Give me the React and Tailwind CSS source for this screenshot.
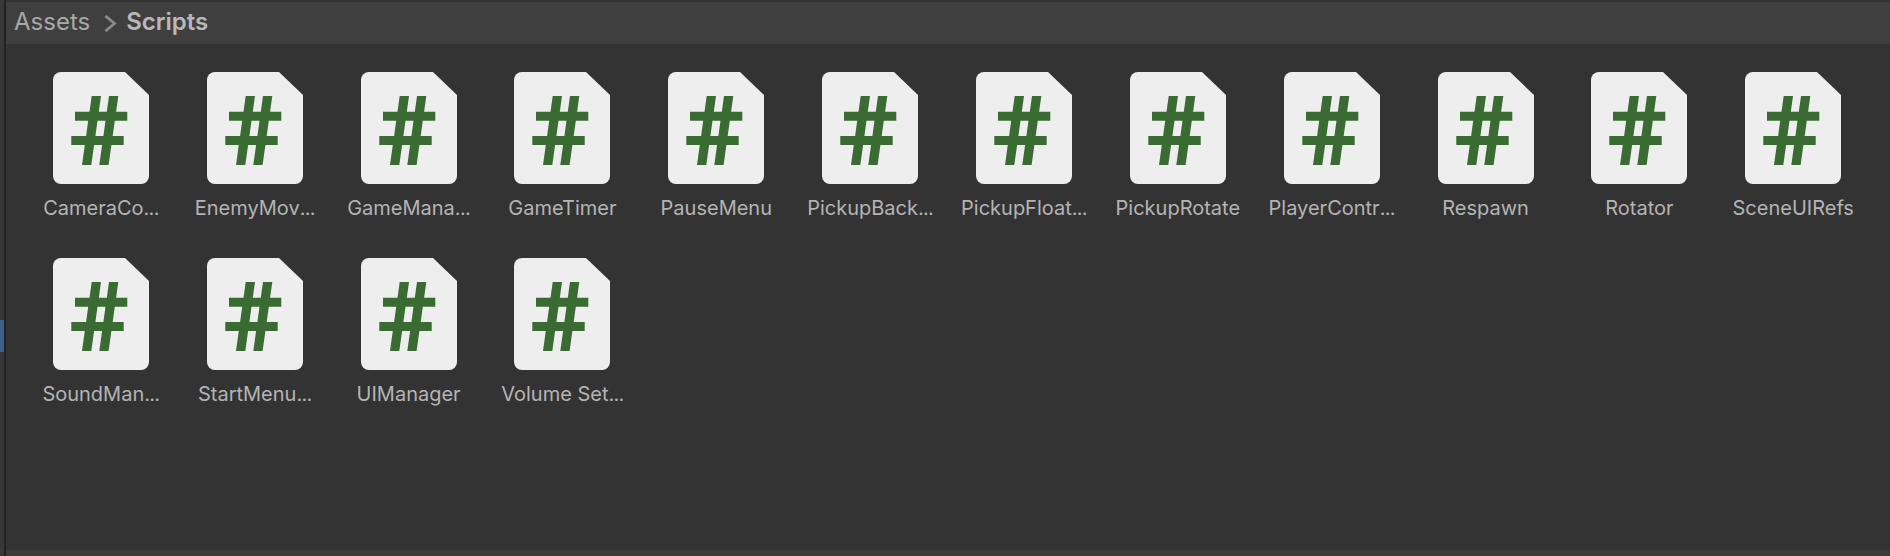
const scripts = [
  { name: 'CameraCo', cut: true },
  { name: 'EnemyMov', cut: true },
  { name: 'GameMana', cut: true },
  { name: 'GameTimer' },
  { name: 'PauseMenu' },
  { name: 'PickupBack', cut: true },
  { name: 'PickupFloat', cut: true },
  { name: 'PickupRotate' },
  { name: 'PlayerContr', cut: true },
  { name: 'Respawn' },
  { name: 'Rotator' },
  { name: 'SceneUIRefs' },
  { name: 'SoundMan', cut: true },
  { name: 'StartMenu', cut: true },
  { name: 'UIManager' },
  { name: 'Volume Set', cut: true },
];

function ScriptIcon() {
  return (
    <svg width="96" height="112" viewBox="0 0 96 112" className="block">
      <path d="M8 0H72L96 23V104a8 8 0 0 1-8 8H8a8 8 0 0 1-8-8V8a8 8 0 0 1 8-8Z" fill="#eeeeee" />
      <path
        d="M38.7 24H48L45.8 39.700H53.800L56 24H65.300L63.100 39.700H74.300V48.700H61.800L59.700 64H70.700V73H58.400L55.600 93H46.300L49.100 73H41.100L38.300 93H29L31.800 73H18.300V64H33.100L35.200 48.700H22V39.700H36.500ZM44.500 48.700L42.400 64H50.400L52.500 48.700Z"
        fill="#3a6b32"
        fillRule="evenodd"
      />
    </svg>
  );
}

export default function App() {
  return (
    <div className="flex h-[556px] w-[1890px] overflow-hidden bg-[#383838] font-['Inter',sans-serif]">
      {/* Left edge of the neighbouring panel */}
      <div className="flex w-[6px] shrink-0 border-r-2 border-[#222222]">
        <div className="mt-[320px] h-[32px] w-[4px] bg-[#3d5f8c]" />
      </div>

      <div className="flex min-w-0 flex-1 flex-col bg-[#333333]">
        <div className="mt-[2px] flex h-[42px] shrink-0 items-center bg-[#3f3f3f] pb-[3px] pl-[8px] text-[24px] leading-none">
          <span className="text-[#a8a8a8]">Assets</span>
          <svg width="13" height="17" viewBox="0 0 13 17" fill="none" stroke="#8a8a8a" strokeWidth="2.800" className="ml-[14px] mr-[9px] mt-[3px]">
            <path d="M1.500 1L10.500 8.500L1.500 16" />
          </svg>
          <span className="font-semibold text-[#b8b8b8]">Scripts</span>
        </div>

        <div className="grid flex-1 grid-cols-[repeat(12,153.850px)] content-start pl-[18px] pt-[28px]">
          {scripts.map(({ name, cut }) => (
            <div key={name} className="flex h-[186px] flex-col items-center">
              <ScriptIcon />
              <div className="mt-[12px] whitespace-nowrap text-[20px] leading-[24px] text-[#b4b4b4]">
                {name}
                {cut && <span className="tracking-[-0.7px]">...</span>}
              </div>
            </div>
          ))}
        </div>

        <div className="h-[6px] shrink-0 bg-[#3c3c3c]" />
      </div>
    </div>
  );
}
